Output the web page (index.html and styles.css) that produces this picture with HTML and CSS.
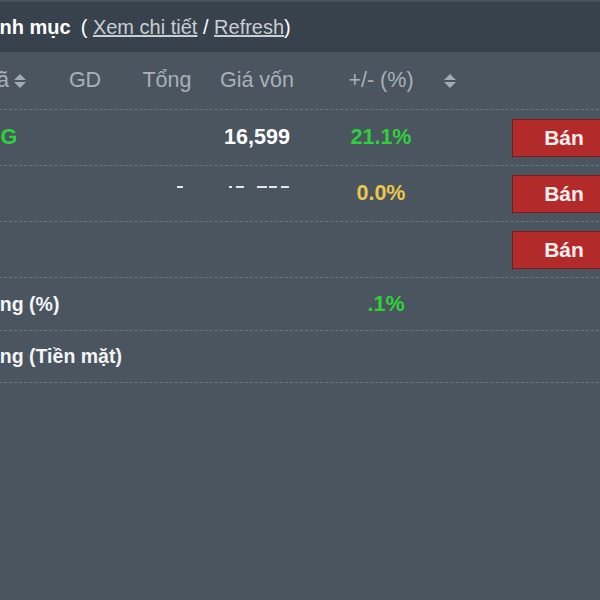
FILE: index.html
```html
<!DOCTYPE html>
<html lang="vi">
<head>
    <meta charset="UTF-8">
    <title>Danh mục</title>
    <link rel="stylesheet" href="styles.css">
</head>
<body>
<div class="page">
    <div class="titlebar">
        <span class="title">Danh mục</span>
        <span class="links">( <a href="#" class="link">Xem chi tiết</a> / <a href="#" class="link">Refresh</a>)</span>
    </div>

    <div class="portfolio">
        <div class="row head">
            <div class="cell code">Mã
                <svg class="sort" width="12" height="16" viewBox="0 0 12 16"><path d="M0 7 L6 1 L12 7 Z M0 9 L6 15 L12 9 Z"/></svg>
            </div>
            <div class="cell">GD</div>
            <div class="cell">Tổng</div>
            <div class="cell">Giá vốn</div>
            <div class="cell pct">+/- (%)</div>
            <div class="cell sortcol">
                <svg class="sort" width="12" height="16" viewBox="0 0 12 16"><path d="M0 7 L6 1 L12 7 Z M0 9 L6 15 L12 9 Z"/></svg>
            </div>
            <div class="cell"></div>
        </div>

        <div class="row">
            <div class="cell code up">DIG</div>
            <div class="cell"></div>
            <div class="cell"></div>
            <div class="cell value">16,599</div>
            <div class="cell pct up">21.1%</div>
            <div class="cell"></div>
            <div class="cell action"><button class="sell">Bán</button></div>
        </div>

        <div class="row">
            <div class="cell code"></div>
            <div class="cell"></div>
            <div class="cell masked">
                <span class="bit w6"></span>
                <span class="bit w3 gap"></span><span class="bit w8"></span><span class="bit w10"></span><span class="bit w9"></span><span class="bit w9"></span>
            </div>
            <div class="cell pct flat">0.0%</div>
            <div class="cell"></div>
            <div class="cell action"><button class="sell">Bán</button></div>
        </div>

        <div class="row">
            <div class="cell code"></div>
            <div class="cell"></div>
            <div class="cell"></div>
            <div class="cell"></div>
            <div class="cell pct"></div>
            <div class="cell"></div>
            <div class="cell action"><button class="sell">Bán</button></div>
        </div>

        <div class="row total">
            <div class="cell label">Tổng (%)</div>
            <div class="cell pct up nudge">.1%</div>
            <div class="cell"></div>
            <div class="cell"></div>
        </div>

        <div class="row total last">
            <div class="cell label">Tổng (Tiền mặt)</div>
            <div class="cell pct"></div>
            <div class="cell"></div>
            <div class="cell"></div>
        </div>
    </div>
</div>
</body>
</html>
```

FILE: styles.css
```css
html, body {
    margin: 0;
    height: 100%;
    overflow: hidden;
}

body {
    background: #4a5560;
    font-family: "Liberation Sans", Arial, sans-serif;
    font-size: 21.5px;
    color: #f2f4f5;
}

.page {
    margin-left: -21px;
    width: 640px;
}

.titlebar {
    height: 52px;
    display: flex;
    align-items: center;
    background: #38424c;
    border-top: 2px solid #45505a;
    box-sizing: border-box;
    margin-left: -5px;
    font-size: 20px;
    white-space: nowrap;
}

.title {
    font-weight: bold;
    color: #ffffff;
}

.links {
    margin-left: 10px;
    color: #ffffff;
}

.link {
    color: #c9ced3;
    text-decoration: underline;
}

.row {
    display: grid;
    grid-template-columns: 61px 90px 74px 106px 132px 59px 1fr;
    align-items: center;
    height: 56px;
    border-bottom: 1px dashed #6c7681;
    box-sizing: border-box;
}

.row.head {
    height: 58px;
    color: #a9b0b7;
}

.row.total {
    grid-template-columns: 331px 132px 59px 1fr;
    height: 53px;
}

.row.total.last {
    height: 52px;
}

.cell {
    text-align: center;
    white-space: nowrap;
}

.cell.code {
    text-align: left;
    display: flex;
    align-items: center;
    gap: 5px;
    font-weight: bold;
}

.head .cell.code {
    font-weight: normal;
}

.cell.label {
    text-align: left;
    margin-left: -3px;
    font-size: 19.5px;
    font-weight: bold;
}

.cell.pct {
    padding-left: 10px;
    font-weight: bold;
}

.head .cell.pct {
    font-weight: normal;
}

.cell.nudge {
    padding-left: 20px;
}

.cell.value {
    font-weight: bold;
    color: #ffffff;
}

.cell.sortcol {
    text-align: left;
    padding-left: 2px;
}

.sort {
    fill: #a3abb2;
    display: block;
}

.up {
    color: #2fd13a;
}

.flat {
    color: #e8c74c;
}

.cell.action {
    padding-left: 11px;
}

.sell {
    display: block;
    width: 104px;
    height: 38px;
    background: #b22a2a;
    border: 1px solid #7a1b1b;
    color: #fdeeee;
    font-family: "Liberation Sans", Arial, sans-serif;
    font-size: 21px;
    font-weight: bold;
    text-align: center;
    padding: 0;
}

.cell.masked {
    grid-column: 3 / span 2;
    text-align: left;
    align-self: start;
    margin-top: 20px;
    padding-left: 47px;
    height: 3px;
    display: flex;
    align-items: flex-start;
}

.bit {
    display: block;
    height: 2px;
    background: #e4e7ea;
    margin-right: 2px;
}

.bit.gap {
    margin-left: 44px;
    margin-right: 4px;
}

.w3 { width: 3px; }
.w6 { width: 6px; }
.w8 { width: 8px; margin-right: 13px; }
.w9 { width: 8px; margin-right: 4px; }
.w10 { width: 10px; }
```
